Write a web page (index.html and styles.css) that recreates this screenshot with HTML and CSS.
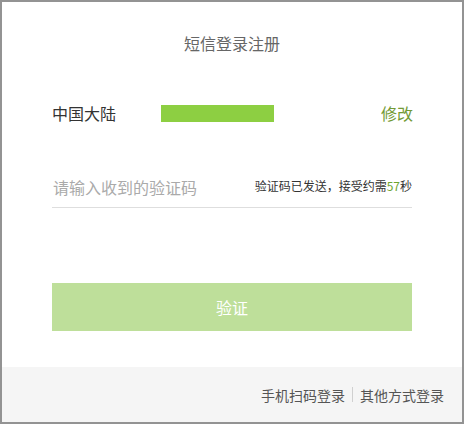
FILE: index.html
```html
<!DOCTYPE html>
<html lang="zh-CN">
<head>
<meta charset="utf-8">
<title>短信登录注册</title>
<link rel="stylesheet" href="styles.css">
</head>
<body>
<div class="frame">
  <div class="content">
    <div class="title">短信登录注册</div>
    <div class="phone-row">
      <span class="region">中国大陆</span>
      <span class="phone-mask"></span>
      <span class="edit">修改</span>
    </div>
    <div class="code-row">
      <span class="placeholder">请输入收到的验证码</span>
      <span class="hint">验证码已发送，接受约需<em class="sec">57</em>秒</span>
    </div>
    <div class="btn">验证</div>
  </div>
  <div class="footer">
    <span class="link">手机扫码登录</span>
    <span class="sep"></span>
    <span class="link">其他方式登录</span>
  </div>
</div>
</body>
</html>
```
FILE: styles.css
```css
* { box-sizing: border-box; }
html, body { margin: 0; padding: 0; background: #fff; }
body {
  font-family: "Noto Sans CJK SC", "Noto Sans", "Liberation Sans", sans-serif;
  width: 464px;
  height: 424px;
}
.frame {
  width: 464px;
  height: 424px;
  border: 2px solid #939393;
  display: flex;
  flex-direction: column;
  background: #fff;
}
.content {
  padding: 0 50px;
  display: flex;
  flex-direction: column;
}
.title {
  margin-top: 29px;
  height: 24px;
  line-height: 24px;
  text-align: center;
  font-size: 16px;
  color: #666;
}
.phone-row {
  margin-top: 38px;
  height: 40px;
  display: flex;
  align-items: center;
}
.region {
  width: 109px;
  font-size: 16px;
  color: #333;
}
.phone-mask {
  width: 113px;
  height: 17px;
  background: #8dcf42;
}
.edit {
  margin-left: auto;
  font-size: 16px;
  color: #739a35;
  margin-right: -1px;
}
.code-row {
  margin-top: 34px;
  height: 41px;
  border-bottom: 1px solid #dedede;
  display: flex;
  align-items: center;
  justify-content: space-between;
}
.placeholder {
  font-size: 16px;
  color: #aaa;
  padding-left: 1px;
}
.hint {
  font-size: 12px;
  color: #333;
  margin-top: -3px;
}
.sec {
  font-style: normal;
  color: #6ea52e;
}
.btn {
  margin-top: 75px;
  height: 48px;
  line-height: 48px;
  background: #bedf9a;
  color: #fff;
  font-size: 16px;
  text-align: center;
}
.footer {
  margin-top: auto;
  height: 55px;
  background: #f5f5f5;
  display: flex;
  align-items: center;
  justify-content: flex-end;
  padding-right: 18px;
  padding-bottom: 0;
}
.link {
  font-size: 14px;
  color: #555;
}
.sep {
  width: 1px;
  height: 15px;
  background: #d0d0d0;
  margin: 0 7px;
}
```
